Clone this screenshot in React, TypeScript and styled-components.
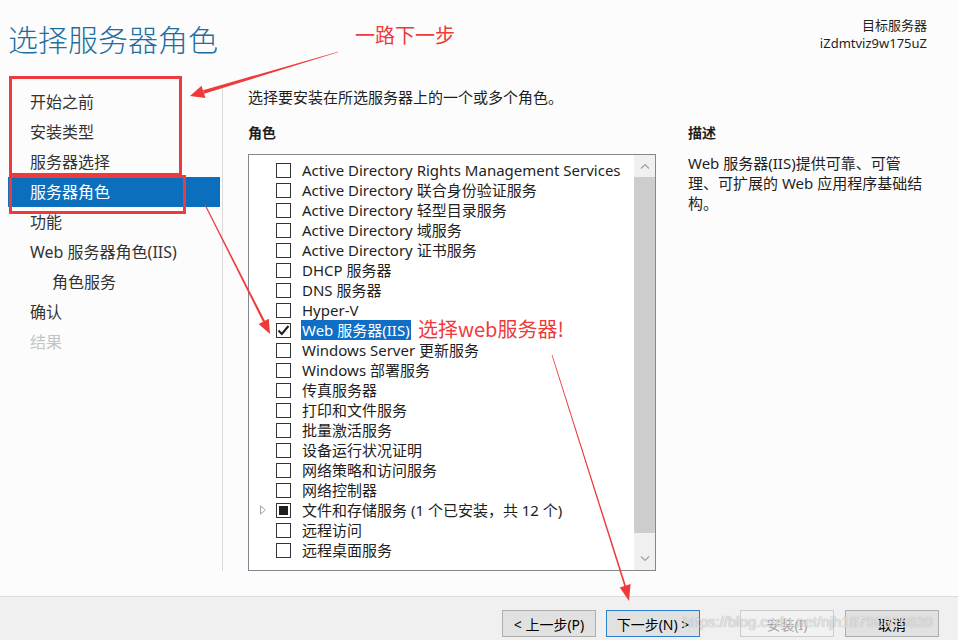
import styled, { createGlobalStyle } from "styled-components";

const GlobalStyle = createGlobalStyle`
  html, body {
    margin: 0;
    padding: 0;
    background: #fcfcfc;
  }
  body {
    font-family: "Noto Sans", "Noto Sans CJK SC", sans-serif;
    color: #1e1e1e;
  }
  * {
    box-sizing: border-box;
  }
`;

const RED = "#ee3a3a";

const Page = styled.div`
  position: relative;
  width: 958px;
  height: 640px;
  display: flex;
  flex-direction: column;
  background: #fcfcfc;
  overflow: hidden;
`;

const Header = styled.header`
  height: 85px;
  display: flex;
  justify-content: space-between;
  align-items: flex-start;
  padding: 16px 31px 0 8px;
`;

const Title = styled.h1`
  margin: 2px 0 0;
  font-size: 30px;
  line-height: 40px;
  font-weight: 300;
  color: #1f6ea0;
  font-family: "Noto Sans CJK SC", sans-serif;
`;

const TargetInfo = styled.div`
  text-align: right;
  font-size: 13px;
  line-height: 18px;
  color: #1e1e1e;
`;

const Body = styled.div`
  height: 486px;
  display: flex;
`;

const Nav = styled.nav`
  width: 223px;
  padding-top: 2px;
  border-right: 1px solid #d9d9d9;
`;

const NavItem = styled.div<{ $active?: boolean; $indent?: boolean; $disabled?: boolean }>`
  height: 30px;
  line-height: 30px;
  margin-left: 8px;
  width: 212px;
  padding-left: ${(p) => (p.$indent ? 44 : 22)}px;
  font-size: 16px;
  color: ${(p) => (p.$active ? "#ffffff" : p.$disabled ? "#c4c4c4" : "#333333")};
  background: ${(p) => (p.$active ? "#0b6fbd" : "transparent")};
`;

const Content = styled.main`
  flex: 1;
  padding-left: 25px;
`;

const Intro = styled.p`
  margin: 2px 0 0;
  font-size: 15px;
  line-height: 20px;
`;

const Columns = styled.div`
  display: flex;
  gap: 32px;
`;

const RolesColumn = styled.section`
  width: 408px;
`;

const DescColumn = styled.section`
  width: 245px;
`;

const SectionLabel = styled.h2`
  margin: 16px 0 0;
  font-size: 14px;
  line-height: 20px;
  font-weight: 700;
`;

const ListBox = styled.div`
  margin-top: 11px;
  height: 417px;
  display: flex;
  border: 1px solid #828790;
  background: #ffffff;
`;

const ListRows = styled.ul`
  flex: 1;
  margin: 0;
  padding: 5px 0 0;
  list-style: none;
`;

const Row = styled.li`
  height: 20px;
  display: grid;
  grid-template-columns: 27px 15px auto;
  align-items: center;
  font-size: 15px;
`;

const Expander = styled.span`
  justify-self: end;
  margin-right: 10px;
  width: 0;
  height: 0;
  border-top: 5px solid transparent;
  border-bottom: 5px solid transparent;
  border-left: 6px solid #a6a6a6;
  position: relative;

  &::after {
    content: "";
    position: absolute;
    left: -5px;
    top: -3.5px;
    border-top: 3.5px solid transparent;
    border-bottom: 3.5px solid transparent;
    border-left: 4px solid #ffffff;
  }
`;

const CheckBox = styled.span`
  width: 15px;
  height: 15px;
  border: 1px solid #333333;
  background: #ffffff;
  display: flex;
  align-items: center;
  justify-content: center;
`;

const Partial = styled.span`
  width: 9px;
  height: 9px;
  background: #1e1e1e;
`;

const RowLabel = styled.span<{ $selected?: boolean }>`
  justify-self: start;
  white-space: nowrap;
  line-height: 20px;
  margin-left: 10px;
  padding: 0 1px;
  color: ${(p) => (p.$selected ? "#ffffff" : "#1e1e1e")};
  background: ${(p) => (p.$selected ? "#0f6fc6" : "transparent")};
`;

const ScrollBar = styled.div`
  width: 21px;
  display: flex;
  flex-direction: column;
  background: #f0f0f0;
`;

const ScrollButton = styled.div`
  height: 22px;
  display: flex;
  align-items: center;
  justify-content: center;
`;

const ScrollThumb = styled.div`
  height: 356px;
  background: #cdcdcd;
`;

const ScrollTrack = styled.div`
  flex: 1;
`;

const DescText = styled.p`
  margin: 10px 0 0;
  font-size: 15px;
  line-height: 20px;
`;

const DescLine = styled.span`
  display: block;
  white-space: nowrap;
`;

const Footer = styled.footer`
  margin-top: auto;
  height: 44px;
  border-top: 1px solid #dcdcdc;
  background: #f0f0f0;
  display: flex;
  justify-content: flex-end;
  align-items: flex-start;
  gap: 40px;
  padding: 13px 19px 0 0;
`;

const ButtonGroup = styled.div<{ $gap: number }>`
  display: flex;
  gap: ${(p) => p.$gap}px;
`;

const Button = styled.button<{ $primary?: boolean }>`
  width: 94px;
  height: 27px;
  padding: 0;
  font-family: "Noto Sans", "Noto Sans CJK SC", sans-serif;
  font-size: 14px;
  color: #000000;
  background: #e1e1e1;
  border: 1px solid ${(p) => (p.$primary ? "#2f7fd0" : "#adadad")};

  &:disabled {
    color: #a6a6a6;
    background: #f2f2f2;
    border-color: #cccccc;
  }
`;

const Overlay = styled.svg`
  position: absolute;
  left: 0;
  top: 0;
  pointer-events: none;
`;

const Note = styled.span<{ $size: number }>`
  position: absolute;
  color: ${RED};
  font-size: ${(p) => p.$size}px;
  line-height: 1;
  white-space: nowrap;
  font-family: "Noto Sans CJK SC", sans-serif;
`;

const NoteTop = styled(Note)`
  left: 355px;
  top: 25px;
`;

const NoteWeb = styled(Note)`
  left: 418px;
  top: 319px;
`;

const Watermark = styled.span`
  position: absolute;
  left: 683px;
  top: 613px;
  font-family: "Liberation Sans", Arial, sans-serif;
  font-size: 15px;
  color: rgba(255, 255, 255, 0.75);
  text-shadow: 0 0 1px rgba(120, 120, 120, 0.9);
  white-space: nowrap;
  pointer-events: none;
`;

type Role = { label: string; checked?: boolean; partial?: boolean; expandable?: boolean; selected?: boolean };

const roles: Role[] = [
  { label: "Active Directory Rights Management Services" },
  { label: "Active Directory 联合身份验证服务" },
  { label: "Active Directory 轻型目录服务" },
  { label: "Active Directory 域服务" },
  { label: "Active Directory 证书服务" },
  { label: "DHCP 服务器" },
  { label: "DNS 服务器" },
  { label: "Hyper-V" },
  { label: "Web 服务器(IIS)", checked: true, selected: true },
  { label: "Windows Server 更新服务" },
  { label: "Windows 部署服务" },
  { label: "传真服务器" },
  { label: "打印和文件服务" },
  { label: "批量激活服务" },
  { label: "设备运行状况证明" },
  { label: "网络策略和访问服务" },
  { label: "网络控制器" },
  { label: "文件和存储服务 (1 个已安装，共 12 个)", partial: true, expandable: true },
  { label: "远程访问" },
  { label: "远程桌面服务" },
];

const steps = [
  { label: "开始之前" },
  { label: "安装类型" },
  { label: "服务器选择" },
  { label: "服务器角色", active: true },
  { label: "功能" },
  { label: "Web 服务器角色(IIS)" },
  { label: "角色服务", indent: true },
  { label: "确认" },
  { label: "结果", disabled: true },
];

const description = ["Web 服务器(IIS)提供可靠、可管", "理、可扩展的 Web 应用程序基础结", "构。"];

const Chevron = ({ up }: { up?: boolean }) => (
  <svg width="10" height="6" viewBox="0 0 10 6">
    <polyline
      points={up ? "1,5.5 5,1.5 9,5.5" : "1,0.5 5,4.5 9,0.5"}
      fill="none"
      stroke="#a0a0a0"
      strokeWidth="1.2"
    />
  </svg>
);

const Tick = () => (
  <svg width="13" height="13" viewBox="0 0 13 13">
    <polyline points="1.5,6.5 4.8,10 11.5,2" fill="none" stroke="#1e1e1e" strokeWidth="2" />
  </svg>
);

const Annotations = () => (
  <Overlay width="958" height="640" viewBox="0 0 958 640">
    <rect x="10.5" y="77.5" width="170" height="97" fill="none" stroke={RED} strokeWidth="3" />
    <rect x="10.5" y="176.5" width="174" height="36" fill="none" stroke={RED} strokeWidth="3" />
    {/* 一路下一步 -> nav */}
    <polygon points="338,52.3 204,93.8 203,90.2 338,51.7" fill={RED} />
    <polygon points="190,96 205.5,98 201.5,85.8" fill={RED} />
    {/* nav -> web server */}
    <polygon points="204.5,205 263,322 265,321 205.5,204.6" fill={RED} />
    <polygon points="270,334 268.8,318.8 258.6,324" fill={RED} />
    {/* web server -> next */}
    <polygon points="551.6,355 624.6,587 626.2,586.5 552.4,355" fill={RED} />
    <polygon points="629,601 630.6,584 619.8,587.4" fill={RED} />
  </Overlay>
);

const App = () => {
  return (
    <Page>
      <GlobalStyle />
      <Header>
        <Title>选择服务器角色</Title>
        <TargetInfo>
          <div>目标服务器</div>
          <div>iZdmtviz9w175uZ</div>
        </TargetInfo>
      </Header>
      <Body>
        <Nav>
          {steps.map((s) => (
            <NavItem key={s.label} $active={s.active} $indent={s.indent} $disabled={s.disabled}>
              {s.label}
            </NavItem>
          ))}
        </Nav>
        <Content>
          <Intro>选择要安装在所选服务器上的一个或多个角色。</Intro>
          <Columns>
            <RolesColumn>
              <SectionLabel>角色</SectionLabel>
              <ListBox>
                <ListRows>
                  {roles.map((r) => (
                    <Row key={r.label}>
                      {r.expandable ? <Expander /> : <span />}
                      <CheckBox>
                        {r.checked && <Tick />}
                        {r.partial && <Partial />}
                      </CheckBox>
                      <RowLabel $selected={r.selected}>{r.label}</RowLabel>
                    </Row>
                  ))}
                </ListRows>
                <ScrollBar>
                  <ScrollButton>
                    <Chevron up />
                  </ScrollButton>
                  <ScrollThumb />
                  <ScrollTrack />
                  <ScrollButton>
                    <Chevron />
                  </ScrollButton>
                </ScrollBar>
              </ListBox>
            </RolesColumn>
            <DescColumn>
              <SectionLabel>描述</SectionLabel>
              <DescText>
                {description.map((line) => (
                  <DescLine key={line}>{line}</DescLine>
                ))}
              </DescText>
            </DescColumn>
          </Columns>
        </Content>
      </Body>
      <Footer>
        <ButtonGroup $gap={10}>
          <Button>&lt; 上一步(P)</Button>
          <Button $primary>下一步(N) &gt;</Button>
        </ButtonGroup>
        <ButtonGroup $gap={11}>
          <Button disabled>安装(I)</Button>
          <Button>取消</Button>
        </ButtonGroup>
      </Footer>
      <Annotations />
      <NoteTop $size={20}>一路下一步</NoteTop>
      <NoteWeb $size={20}>选择web服务器!</NoteWeb>
      <Watermark>https://blog.csdn.net/njh18790816639</Watermark>
    </Page>
  );
};

export default App;
